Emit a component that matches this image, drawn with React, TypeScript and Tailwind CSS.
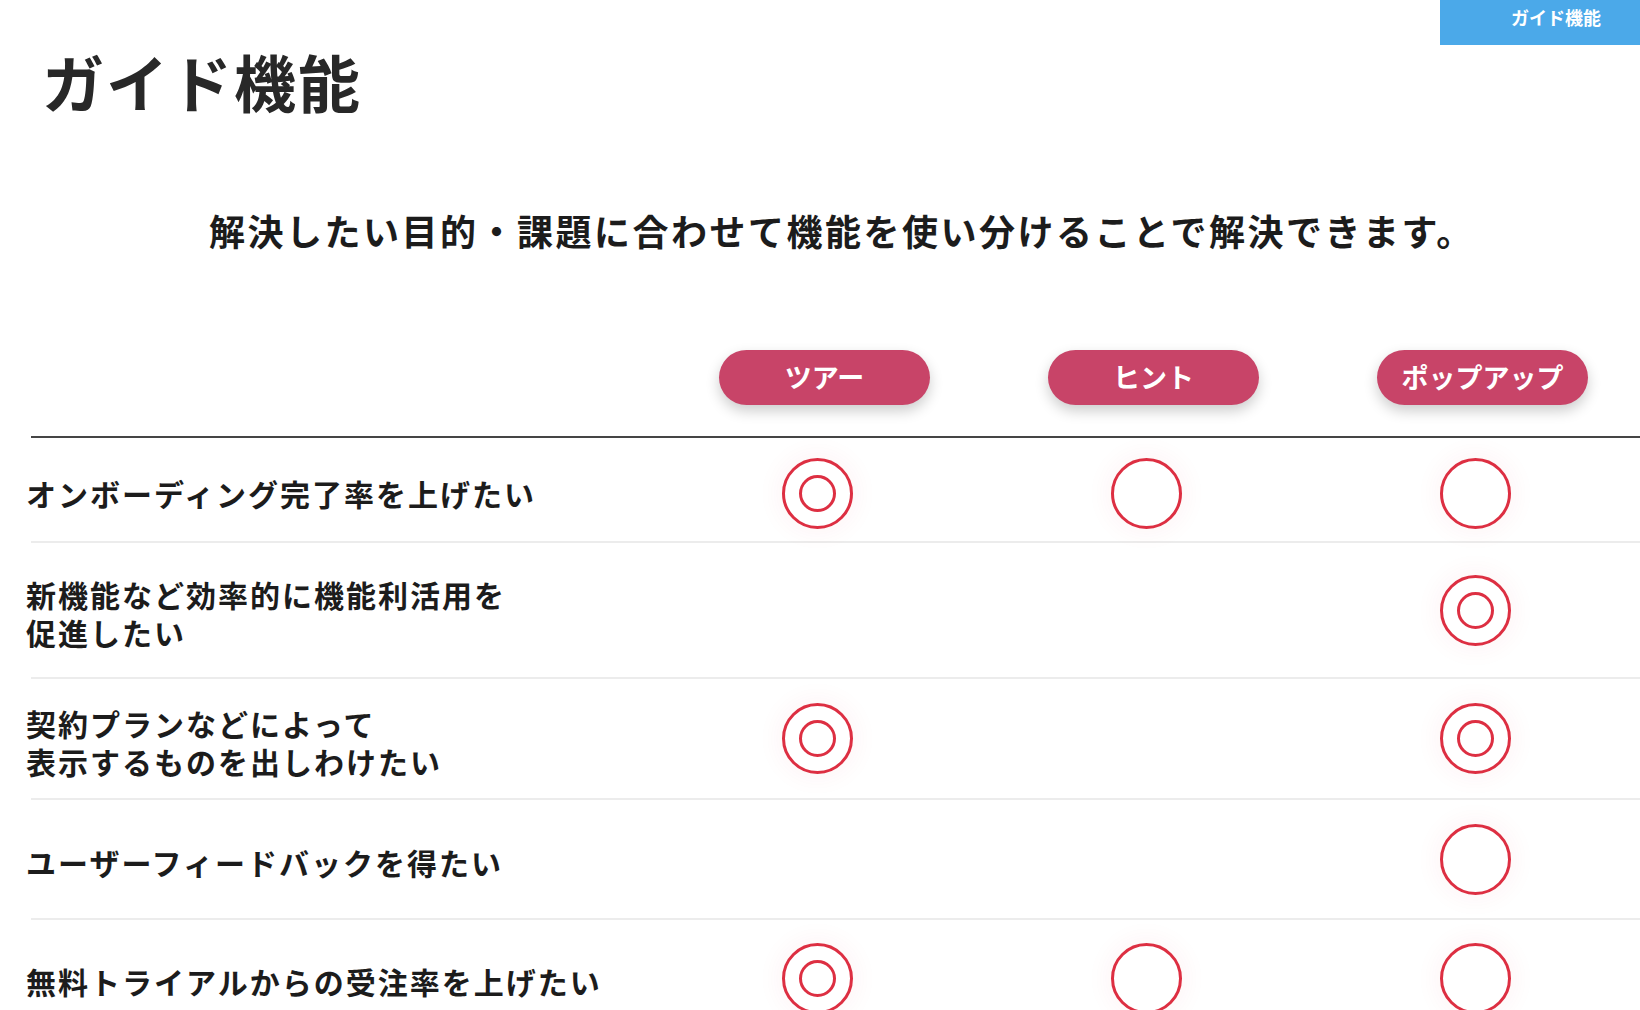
import { Fragment } from 'react';

const columns = ['ツアー', 'ヒント', 'ポップアップ'];

type Mark = 'double' | 'single' | null;

const rows: { label: string[]; marks: Mark[]; h: string; pad: string }[] = [
  { label: ['オンボーディング完了率を上げたい'], marks: ['double', 'single', 'single'], h: 'h-[105px]', pad: 'pt-[8px]' },
  { label: ['新機能など効率的に機能利活用を', '促進したい'], marks: [null, null, 'double'], h: 'h-[136px]', pad: 'pt-0' },
  { label: ['契約プランなどによって', '表示するものを出しわけたい'], marks: ['double', null, 'double'], h: 'h-[121px]', pad: 'pt-0' },
  { label: ['ユーザーフィードバックを得たい'], marks: [null, null, 'single'], h: 'h-[120px]', pad: 'pt-0' },
  { label: ['無料トライアルからの受注率を上げたい'], marks: ['double', 'single', 'single'], h: 'h-[118px]', pad: 'pt-0' },
];

function Circle({ type }: { type: Mark }) {
  if (!type) return null;
  return (
    <div className="flex h-[71px] w-[71px] items-center justify-center rounded-full border-[3px] border-[#dd2f42] shadow-[0_0_28px_rgba(221,47,66,0.07)]">
      {type === 'double' && <div className="h-[37px] w-[37px] rounded-full border-[3px] border-[#dd2f42]" />}
    </div>
  );
}

export default function App() {
  return (
    <div className="relative min-h-[1010px] overflow-hidden bg-white font-['Noto_Sans_CJK_JP',sans-serif] text-[#1c1c1c]">
      <div className="absolute right-0 top-0 h-[45px] w-[200px] bg-[#4ba9e9] pl-[71px] pt-[5px] text-[18px] font-bold leading-[24px] text-white">
        ガイド機能
      </div>

      <h1 className="pl-[42px] pt-[50px] text-[62px] font-bold leading-[62px] tracking-[2px] text-[#282828]">ガイド機能</h1>

      <p className="mt-[100px] pl-[209px] text-[36px] font-bold leading-[36px] tracking-[2.5px]">
        解決したい目的・課題に合わせて機能を使い分けることで解決できます。
      </p>

      <div className="ml-[31px] mt-[102px]">
        <div className="grid grid-cols-[622px_329px_329px_329px] border-b-2 border-[#454545] pb-[31px]">
          <div />
          {columns.map((col) => (
            <div key={col} className="flex justify-center pl-[14px]">
              <div className="flex h-[55px] w-[211px] items-center justify-center rounded-full bg-[#c84468] text-[27px] font-bold text-white shadow-[0_6px_14px_rgba(0,0,0,0.2)]">
                {col}
              </div>
            </div>
          ))}
        </div>

        {rows.map((row, i) => (
          <div
            key={i}
            className={`grid grid-cols-[622px_329px_329px_329px] items-center border-b-2 border-[#ececec] ${row.h}`}
          >
            <p className="ml-[-5px] pt-[6px] text-[30px] font-bold leading-[38px] tracking-[2px]">
              {row.label.map((line, k) => (
                <Fragment key={line}>
                  {k > 0 && <br />}
                  {line}
                </Fragment>
              ))}
            </p>
            {row.marks.map((m, j) => (
              <div key={j} className={`flex justify-center ${row.pad}`}>
                <Circle type={m} />
              </div>
            ))}
          </div>
        ))}
      </div>
    </div>
  );
}
